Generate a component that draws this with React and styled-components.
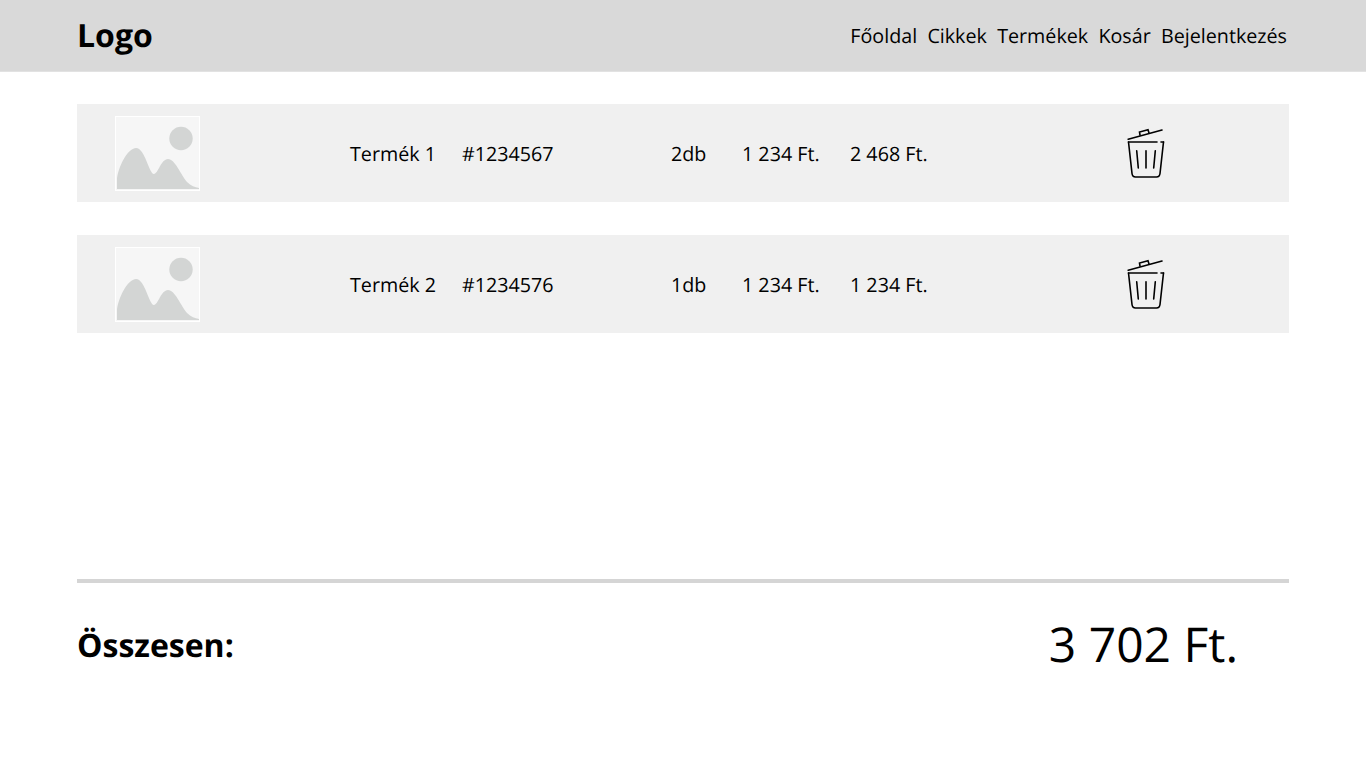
import React from "react";
import styled, { createGlobalStyle } from "styled-components";

const GlobalStyle = createGlobalStyle`
  html, body {
    margin: 0;
    padding: 0;
    background: #fff;
    color: #000;
    font-family: "Open Sans", "Liberation Sans", sans-serif;
    text-rendering: geometricPrecision;
  }
`;

const Header = styled.header`
  height: 72px;
  box-sizing: border-box;
  background: #d9d9d9;
  padding: 0 79px 0 77px;
  display: flex;
  align-items: center;
  justify-content: space-between;
  border-bottom: 1px solid #e2e2e2;
`;
const Logo = styled.div`
  font-size: 32px;
  font-weight: 700;
  line-height: 44px;
`;
const Nav = styled.nav`
  display: flex;
  gap: 10.3px;
`;
const NavLink = styled.a`
  font-size: 19.7px;
  line-height: 27px;
  color: #000;
`;
const Main = styled.main`
  padding: 32px 77px 0;
`;
const List = styled.div`
  display: flex;
  flex-direction: column;
  gap: 33px;
  height: 475px;
`;
const Row = styled.div`
  height: 98px;
  background: #f0f0f0;
  display: grid;
  grid-template-columns: 235px 112px 209px 71px 108px 276px 40px;
  align-items: center;
  padding-left: 38px;
`;
const Cell = styled.div`
  font-size: 19.7px;
  line-height: 27px;
  white-space: nowrap;
`;
const Thumb = styled.svg`
  display: block;
  width: 85px;
  height: 75px;
`;
const TrashIcon = styled.svg`
  display: block;
  width: 40px;
  height: 52px;
`;
const Rule = styled.hr`
  margin: 0;
  border: 0;
  height: 4px;
  background: #d5d5d5;
`;
const Summary = styled.div`
  display: flex;
  justify-content: space-between;
  align-items: center;
  height: 125px;
  padding-right: 51px;
`;
const SummaryLabel = styled.div`
  font-size: 32px;
  font-weight: 700;
  line-height: 44px;
`;
const SummaryValue = styled.div`
  font-size: 48px;
  line-height: 65px;
  padding-bottom: 3px;
`;

const Placeholder = () => (
  <Thumb viewBox="0 0 85 75">
    <rect x="0.5" y="0.5" width="84" height="74" fill="#f6f6f6" stroke="#fff" />
    <circle cx="66" cy="22.5" r="11.7" fill="#d3d5d4" />
    <path
      d="M2 73V62C5 46 14 32 21 32C30 32 34 58 39 58C43 58 46 43 53 43C60 43 66 59 72 66C76 70 80 71 84 72V73Z"
      fill="#d3d5d4"
    />
  </Thumb>
);

const Trash = () => (
  <TrashIcon viewBox="0 0 40 52" fill="none" stroke="#000" strokeWidth="1.6" strokeLinecap="round">
    <path d="M2.2 12.3L36 3" />
    <path d="M14 8L13.5 5L22 2.8L23 6" />
    <path d="M2.5 15H31M35 15H37.5" />
    <path d="M2.5 15L6 46.5C6.3 49 7.5 50 9.5 50H30.5C32.5 50 33.7 49 34 46.5L37.5 15" />
    <path d="M10.7 23.7L12.3 41M20 23.7V41M29.3 23.7L27.7 41" />
  </TrashIcon>
);

const items = [
  { name: "Termék 1", code: "#1234567", qty: "2db", price: "1 234 Ft.", total: "2 468 Ft." },
  { name: "Termék 2", code: "#1234576", qty: "1db", price: "1 234 Ft.", total: "1 234 Ft." },
];

const links = ["Főoldal", "Cikkek", "Termékek", "Kosár", "Bejelentkezés"];

export default function App() {
  return (
    <>
      <GlobalStyle />
      <Header>
        <Logo>Logo</Logo>
        <Nav>
          {links.map((l) => (
            <NavLink key={l}>{l}</NavLink>
          ))}
        </Nav>
      </Header>
      <Main>
        <List>
          {items.map((it) => (
            <Row key={it.name}>
              <Placeholder />
              <Cell>{it.name}</Cell>
              <Cell>{it.code}</Cell>
              <Cell>{it.qty}</Cell>
              <Cell>{it.price}</Cell>
              <Cell>{it.total}</Cell>
              <Trash />
            </Row>
          ))}
        </List>
        <Rule />
        <Summary>
          <SummaryLabel>Összesen:</SummaryLabel>
          <SummaryValue>3 702 Ft.</SummaryValue>
        </Summary>
      </Main>
    </>
  );
}
